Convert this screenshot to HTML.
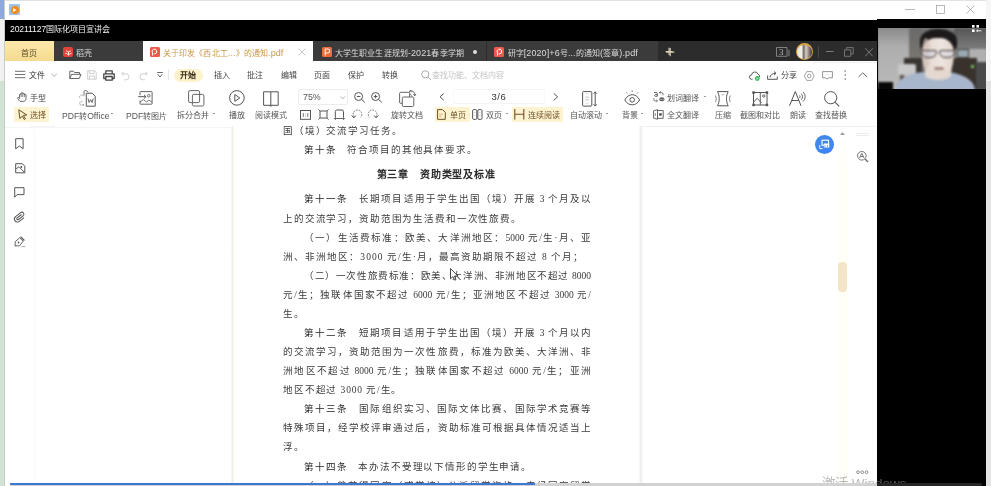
<!DOCTYPE html>
<html lang="zh-CN">
<head>
<meta charset="utf-8">
<style>
*{margin:0;padding:0;box-sizing:border-box}
html,body{width:991px;height:486px;overflow:hidden;background:#fff;position:relative;font-family:"Liberation Sans",sans-serif}
body{will-change:transform}
.a{position:absolute}
.ui{font-family:"Liberation Sans",sans-serif;font-size:8px;line-height:12px;color:#333;white-space:nowrap}
.doc{font-family:"Liberation Serif",serif;font-size:9.5px;line-height:12px;color:#3a3a3a;white-space:nowrap;letter-spacing:0.86px}
.art{color:#1e1e1e}
.L{font-size:9px}
.j2{text-align:justify;text-align-last:justify;letter-spacing:0}
.j{width:308px;text-align:justify;text-align-last:justify}
svg{position:absolute;overflow:visible}
.t8{font-family:"Liberation Sans",sans-serif;font-size:8px;line-height:12px;white-space:nowrap;margin-top:1.6px}
</style>
</head>
<body>
<!-- left desktop strip -->
<div class="a" style="left:0;top:0;width:5px;height:19px;background:#8eaadb"></div>
<div class="a" style="left:0;top:19px;width:5px;height:62px;background:#f1f1f1"></div>
<div class="a" style="left:0;top:81px;width:5px;height:405px;background:#d1e3d3"></div>
<div class="a" style="left:4px;top:0;width:1px;height:486px;background:#c8ccc8"></div>
<!-- right desktop strip -->
<div class="a" style="left:986px;top:0;width:5px;height:81px;background:#f6f6f6"></div>
<div class="a" style="left:986px;top:81px;width:5px;height:405px;background:#e4e4e4"></div>

<!-- title bar -->
<div class="a" style="left:5px;top:0;width:981px;height:1px;background:#e2e2e2"></div>
<div class="a" style="left:9px;top:4px;width:11px;height:11px;background:#9ec3e6;border-radius:1px"></div>
<div class="a" style="left:10.5px;top:5.5px;width:8px;height:8px;background:#f08a1c;border-radius:50%"></div>
<svg style="left:13px;top:7.5px" width="4" height="4"><path d="M0 0 L3.5 2 L0 4Z" fill="#fff"/></svg>
<svg style="left:905px;top:9px" width="10" height="2"><path d="M0 0.5H10" stroke="#9a9a9a" stroke-width="0.7"/></svg>
<svg style="left:935.5px;top:5px" width="9" height="9"><rect x="0.5" y="0.5" width="8" height="8" fill="none" stroke="#9a9a9a" stroke-width="0.7"/></svg>
<svg style="left:966px;top:5px" width="9" height="9"><path d="M0.5 0.5L8.5 8.5M8.5 0.5L0.5 8.5" stroke="#9a9a9a" stroke-width="0.7"/></svg>

<!-- black bar -->
<div class="a" style="left:5px;top:19.5px;width:981px;height:21.5px;background:#000"></div>
<div class="a ui" style="left:10px;top:23.2px;color:#f4f4f4"><span style="font-size:8.6px;letter-spacing:-0.1px">20211127</span>国际化项目宣讲会</div>

<!-- tab bar -->
<div class="a" style="left:5px;top:41px;width:872px;height:20.4px;background:#2c2c2c"></div>
<div class="a" style="left:5px;top:41px;width:49px;height:20.4px;background:linear-gradient(#fbe9ad,#f5da8f)"></div>
<div class="a ui" style="left:21px;top:48px;color:#5b4a27">首页</div>
<div class="a" style="left:54px;top:41px;width:89px;height:20.4px;background:#3b3b3b"></div>
<div class="a" style="left:63px;top:47px;width:10px;height:10px;background:#e8403a;border-radius:2px"></div>
<div class="a ui" style="left:75.5px;top:48px;color:#dcdcdc;letter-spacing:0.3px">稻壳</div>
<div class="a" style="left:143px;top:41px;width:170px;height:20.4px;background:#fff"></div>
<div class="a" style="left:149.5px;top:47px;width:10px;height:10px;background:#ef5a4a;border-radius:1.5px"></div>
<div class="a ui" style="left:163px;top:47px;color:#c99843;letter-spacing:0.1px">关于印发《西北工<span class="L">...</span>》的通知<span class="L">.pdf</span></div>
<svg style="left:298px;top:47.5px" width="8" height="8"><path d="M0.5 0.5L7.5 7.5M7.5 0.5L0.5 7.5" stroke="#c9c9c9" stroke-width="1"/></svg>
<div class="a" style="left:313px;top:41px;width:173px;height:20.4px;background:#3b3b3b"></div>
<div class="a" style="left:322px;top:47px;width:10px;height:10px;background:#f06a3a;border-radius:1.5px"></div>
<div class="a ui" style="left:335px;top:47px;color:#dcdcdc;letter-spacing:0.1px">大学生职业生涯规划<span class="L">-2021</span>春季学期</div>
<div class="a" style="left:473px;top:50px;width:4px;height:4px;background:#ddd;border-radius:50%"></div>
<div class="a" style="left:486px;top:41px;width:1px;height:20.4px;background:#2b2b2b"></div>
<div class="a" style="left:487px;top:41px;width:171px;height:20.4px;background:#3b3b3b"></div>
<div class="a" style="left:494px;top:47px;width:10px;height:10px;background:#ef5a4a;border-radius:1.5px"></div>
<div class="a ui" style="left:507.5px;top:47px;color:#dcdcdc;letter-spacing:0.1px">研字<span class="L">[2020]+6</span>号<span class="L">...</span>的通知<span class="L">(</span>签章<span class="L">).pdf</span></div>
<div class="a ui" style="left:665px;top:44px;color:#ddd;font-size:14px;line-height:14px">+</div>

<svg style="left:151px;top:48px" width="7" height="8"><path d="M1.5 7.5V4.8 M1.5 4.8A2.3 2.3 0 1 1 3.6 5.8H2.6" fill="none" stroke="#fff" stroke-width="1"/></svg>
<svg style="left:323.5px;top:48px" width="7" height="8"><path d="M1.2 7.5V1H3.8A2 2 0 0 1 3.8 5H1.2" fill="none" stroke="#fff" stroke-width="1"/></svg>
<svg style="left:495.5px;top:48px" width="7" height="8"><path d="M1.5 7.5V4.8 M1.5 4.8A2.3 2.3 0 1 1 3.6 5.8H2.6" fill="none" stroke="#fff" stroke-width="1"/></svg>
<svg style="left:65px;top:49px" width="7" height="7"><path d="M3.5 6.5V2.5 M3.5 6C2.5 4.8 1.5 4.3 0.5 4.3 M3.5 6C4.5 4.8 5.5 4.3 6.5 4.3 M3.5 3.5C2.8 2.5 2 2 1.2 2 M3.5 3.5C4.2 2.5 5 2 5.8 2" fill="none" stroke="#fff" stroke-width="0.9"/></svg>
<svg style="left:665.5px;top:47.5px" width="9" height="9"><path d="M4.2 0V8.2 M0 4.1H8.3" stroke="#d9cba6" stroke-width="1.2"/></svg>
<svg style="left:776px;top:47px" width="15" height="10"><path d="M0.5 0.5H11V9.3H0.5Z" fill="none" stroke="#8a8a8a" stroke-width="0.9"/><path d="M11 2L14 3.2V9.3H11" fill="#5a5a5a" stroke="none"/></svg>
<div class="a" style="left:779px;top:47px;font-family:'Liberation Serif',serif;font-size:9px;line-height:10px;color:#bbb">3</div>
<div class="a" style="left:796px;top:43.3px;width:17px;height:17px;border-radius:50%;background:#d9a440"></div>
<div class="a" style="left:797.2px;top:44.5px;width:14.6px;height:14.6px;border-radius:50%;background:linear-gradient(90deg,#e8e4de 0,#f2efe8 30%,#6e6a64 45%,#d8d0c4 60%,#3a3230 100%)"></div>
<div class="a" style="left:818px;top:46px;width:1px;height:12px;background:#4a4a4a"></div>
<svg style="left:826px;top:50.5px" width="8" height="2"><path d="M0 0.5H7.5" stroke="#7c7c7c" stroke-width="1"/></svg>
<svg style="left:844px;top:47px" width="10" height="10"><path d="M0.5 2.8H6.8V9.3H0.5Z M2.6 2.8V0.6H9.2V7H6.8" fill="none" stroke="#7c7c7c" stroke-width="0.9"/></svg>
<svg style="left:864.5px;top:47.5px" width="8" height="9"><path d="M0.3 0.3L7.7 8.3 M7.7 0.3L0.3 8.3" stroke="#7c7c7c" stroke-width="1"/></svg>
<!-- overlay video panel -->
<div class="a" style="left:877px;top:19px;width:109px;height:467px;background:#000"></div>
<div class="a" style="left:877.5px;top:27.6px;width:108.3px;height:61.3px;overflow:hidden;background:#808080">
 <div class="a" style="left:0;top:0;width:109px;height:62px;filter:blur(0.9px)">
  <div class="a" style="left:0;top:0;width:109px;height:62px;background:linear-gradient(90deg,#8c8c8c 0,#a6a6a6 15%,#b2b2b2 26%,#767676 34%,#6a6a6a 50%,#7e7e7e 75%,#8c8c8c 100%)"></div>
  <div class="a" style="left:0;top:0;width:31px;height:62px;background:linear-gradient(180deg,#8a8a8a 0,#aeaeae 30%,#bababa 100%)"></div>
  <div class="a" style="left:31px;top:0;width:13px;height:32px;background:linear-gradient(180deg,#6a6a6a,#7a7670)"></div>
  <div class="a" style="left:76px;top:0;width:33px;height:22px;background:linear-gradient(180deg,#555,#7e7e7e)"></div>
  <div class="a" style="left:78px;top:21px;width:31px;height:14px;background:#b0b0b0"></div>
  <div class="a" style="left:79px;top:21px;width:12px;height:9px;background:#9aa8b0;border:1px solid #3a3a3a"></div>
  <div class="a" style="left:26px;top:30px;width:18px;height:16px;background:#3a3530"></div>
  <div class="a" style="left:74px;top:30px;width:25px;height:32px;background:#38312c"></div>
  <div class="a" style="left:98px;top:34px;width:11px;height:28px;background:#4a4a4a"></div>
  <div class="a" style="left:93px;top:37px;width:3px;height:3px;background:#7ac060"></div>
  <div class="a" style="left:20.5px;top:36.5px;width:18px;height:11px;background:#c8c8c8;border-radius:2px 2px 0 0"></div>
  <div class="a" style="left:22px;top:47px;width:4px;height:15px;background:#5a524c"></div>
  <div class="a" style="left:42px;top:1px;width:37px;height:24px;border-radius:48% 48% 30% 30%;background:#1c1a1a"></div>
  <div class="a" style="left:44.5px;top:10px;width:31.5px;height:44px;border-radius:45% 45% 50% 50% / 35% 35% 70% 70%;background:linear-gradient(90deg,#cdbcb4 0,#e6dad4 25%,#efe6e0 60%,#e2d4cc 100%)"></div>
  <div class="a" style="left:44px;top:10px;width:8px;height:30px;border-radius:50%;background:#d4c4bc;opacity:0.7"></div>
  <div class="a" style="left:43.5px;top:22px;width:16px;height:8.5px;border-radius:2px 2px 6px 6px;border:1.4px solid #3e3a36;background:rgba(200,205,235,0.3)"></div>
  <div class="a" style="left:61px;top:22px;width:16px;height:8.5px;border-radius:2px 2px 6px 6px;border:1.4px solid #3e3a36;background:rgba(200,205,235,0.3)"></div>
  <div class="a" style="left:56px;top:39px;width:10px;height:3px;border-radius:2px;background:#a88a84"></div>
  <div class="a" style="left:17.5px;top:44px;width:80px;height:30px;border-radius:40% 40% 0 0 / 60% 60% 0 0;background:#a8b6cc"></div>
  <div class="a" style="left:47px;top:42px;width:26px;height:10px;border-radius:0 0 50% 50%;background:#e4d8d0"></div>
  <div class="a" style="left:0;top:54px;width:15px;height:10px;background:#080808"></div>
 </div>
</div>
<svg style="left:972px;top:25px" width="10" height="8"><rect x="0" y="0" width="2.6" height="2.6" fill="#fff"/><rect x="4.4" y="0" width="2.6" height="2.6" fill="#fff"/><rect x="0" y="4.4" width="2.6" height="2.6" fill="#fff"/><path d="M4.6 5.8H9.5 M5.8 4.7L4.6 5.8L5.8 6.9" stroke="#fff" stroke-width="0.9" fill="none"/></svg>


<!-- menu row -->
<div class="a" style="left:5px;top:62px;width:872px;height:64px;background:#fff"></div>
<svg style="left:15px;top:70px" width="11" height="9"><path d="M0 1.3H10.3M0 4.5H10.3M0 7.7H10.3" stroke="#666" stroke-width="0.95"/></svg>
<div class="a t8" style="left:29px;top:68.4px;color:#333">文件</div>
<svg style="left:50.5px;top:72.5px" width="7" height="5"><path d="M0.5 0.5L3.2 3.5L6 0.5" fill="none" stroke="#aaa" stroke-width="0.9"/></svg>
<svg style="left:69px;top:70px" width="13" height="10"><path d="M0.8 8.5V1.2H4.3L5.5 2.5H10.5V4.2M0.8 8.5L2.6 4.3H12L10.2 8.5Z" fill="none" stroke="#666" stroke-width="1" stroke-linejoin="round"/></svg>
<svg style="left:87px;top:70px" width="10" height="10"><path d="M0.7 0.7H7.5L9.2 2.4V9.2H0.7Z M2.5 0.7V3.5H7V0.7 M2.5 9.2V6H7.5V9.2" fill="none" stroke="#d0d0d0" stroke-width="1"/></svg>
<svg style="left:103px;top:69.5px" width="12" height="11"><path d="M2.8 3.5V0.8H9.2V3.5 M2.5 8.5H0.8V3.8H11.2V8.5H9.5 M2.8 6.5H9.2V10.2H2.8Z" fill="none" stroke="#444" stroke-width="1.3" stroke-linejoin="round"/></svg>
<svg style="left:121px;top:70.5px" width="9" height="9"><path d="M2.5 0.8L0.8 2.8L2.8 4.5 M0.9 2.8H5A3 3 0 0 1 5 8.8H3" fill="none" stroke="#d0d0d0" stroke-width="1"/></svg>
<svg style="left:138.5px;top:70.5px" width="9" height="9"><path d="M6.5 0.8L8.2 2.8L6.2 4.5 M8.1 2.8H4A3 3 0 0 0 4 8.8H6" fill="none" stroke="#d0d0d0" stroke-width="1"/></svg>
<svg style="left:157px;top:72px" width="6" height="6"><path d="M0.3 0.5H5.7 M0.8 2.3L3 5L5.2 2.3" fill="none" stroke="#555" stroke-width="0.9"/></svg>
<div class="a" style="left:168px;top:70px;width:1px;height:10px;background:#e6e6e6"></div>
<div class="a" style="left:173.5px;top:68.5px;width:29px;height:13px;border-radius:6.5px;background:#fdf2cc"></div>
<div class="a t8" style="left:180px;top:68.4px;color:#3a2f1a;font-weight:bold">开始</div>
<div class="a t8" style="left:213.5px;top:68.4px;color:#444">插入</div>
<div class="a t8" style="left:247px;top:68.4px;color:#444">批注</div>
<div class="a t8" style="left:281px;top:68.4px;color:#444">编辑</div>
<div class="a t8" style="left:314px;top:68.4px;color:#444">页面</div>
<div class="a t8" style="left:348px;top:68.4px;color:#444">保护</div>
<div class="a t8" style="left:381.5px;top:68.4px;color:#444">转换</div>
<svg style="left:420.5px;top:70px" width="11" height="11"><circle cx="4.3" cy="4.3" r="3.6" fill="none" stroke="#aaa" stroke-width="1"/><path d="M7 7L10 10" stroke="#aaa" stroke-width="1"/></svg>
<div class="a t8" style="left:432px;top:68.4px;color:#c4c4c4">查找功能、文档内容</div>
<!-- right menu icons -->
<svg style="left:748.5px;top:70.5px" width="13" height="10"><path d="M3.5 8.3H2.8A2.2 2.2 0 0 1 2.6 3.9A3.3 3.3 0 0 1 9 3.2A2.4 2.4 0 0 1 10.6 6.2" fill="none" stroke="#555" stroke-width="1"/><circle cx="8.3" cy="7.5" r="2.4" fill="#3dbb62"/><path d="M7.2 7.5L8 8.3L9.4 6.8" fill="none" stroke="#fff" stroke-width="0.7"/></svg>
<svg style="left:767px;top:71px" width="11" height="9"><path d="M0.6 4.5V8.3H10.3V5.5 M3 6.5C3.5 3.5 5.5 2.3 8.8 2.3 M7 0.5L9 2.3L7 4.2" fill="none" stroke="#555" stroke-width="1"/></svg>
<div class="a t8" style="left:781px;top:68.4px;color:#444">分享</div>
<svg style="left:803.5px;top:70.5px" width="11" height="10"><path d="M2.8 0.6H7.7L10.2 5L7.7 9.4H2.8L0.3 5Z" fill="none" stroke="#999" stroke-width="0.9"/><circle cx="5.25" cy="5" r="1.8" fill="none" stroke="#999" stroke-width="0.9"/></svg>
<svg style="left:821.5px;top:70.5px" width="11" height="9"><path d="M0.6 0.6H10.4V6.8H6.3L5 8.2L3.7 6.8H0.6Z" fill="none" stroke="#888" stroke-width="0.9"/><path d="M3.3 3.7H7.7" stroke="#bbb" stroke-width="0.6" stroke-dasharray="1 0.6"/></svg>
<svg style="left:843.5px;top:70px" width="3" height="10"><circle cx="1.2" cy="1" r="0.75" fill="#666"/><circle cx="1.2" cy="5" r="0.75" fill="#666"/><circle cx="1.2" cy="9" r="0.75" fill="#666"/></svg>
<svg style="left:857.5px;top:72px" width="10" height="6"><path d="M0.5 5L4.8 0.8L9.2 5" fill="none" stroke="#666" stroke-width="1"/></svg>
<div class="a" style="left:812px;top:62px;width:65px;height:1px;background:#eeeeee"></div>

<!-- toolbar row -->
<svg style="left:17px;top:91.5px" width="10" height="10"><path d="M3 9.4C1.9 8.6 1 7.3 0.7 6.3C0.5 5.6 1.2 5.2 1.8 5.7L2.6 6.4V2.6A0.8 0.8 0 0 1 4.2 2.6V1.4A0.8 0.8 0 0 1 5.8 1.4V2.1A0.8 0.8 0 0 1 7.4 2.1V2.9A0.8 0.8 0 0 1 9 2.9V6.3C9 8.2 8.1 9.4 6.4 9.4Z" fill="none" stroke="#555" stroke-width="0.9" stroke-linejoin="round"/><path d="M4.2 2.6V5 M5.8 2.1V5 M7.4 2.9V5" stroke="#555" stroke-width="0.7"/></svg>
<div class="a t8" style="left:30px;top:91px;color:#444">手型</div>
<div class="a" style="left:13.5px;top:106.5px;width:35px;height:15.5px;background:#fdf3d0"></div>
<svg style="left:17.5px;top:108.5px" width="10" height="11"><path d="M0.8 0.8L8.8 6L5.3 6.4L7.5 9.8L6.2 10.4L4.2 7.2L1.8 9.5Z" fill="none" stroke="#6e5024" stroke-width="1" stroke-linejoin="round"/></svg>
<div class="a t8" style="left:30px;top:108px;color:#6e5024">选择</div>

<!-- PDF转Office -->
<svg style="left:79px;top:90px" width="18" height="17"><path d="M5 5.5V1.3A0.6 0.6 0 0 1 5.6 0.7H7.8L9.2 2.2" fill="none" stroke="#666" stroke-width="0.9"/><path d="M7.3 3.2H13.2L16.2 6.2V16.2H7.3Z" fill="none" stroke="#555" stroke-width="1"/><path d="M9 8.5L10.1 12.5L11.6 9.6L13.1 12.5L14.2 8.5" fill="none" stroke="#555" stroke-width="0.9"/><path d="M4.5 6.2A2 2 0 0 0 0.8 7.8V8.3 M3.3 11.6A2 2 0 0 0 0.8 12.8V13.8 M0.8 13.8A1.3 1.3 0 0 0 2 15H5 M4 14L5 15L4 16" fill="none" stroke="#777" stroke-width="0.8" stroke-dasharray="1.4 0.8"/></svg>
<div class="a t8" style="left:62px;top:108px;color:#555;font-size:8.6px">PDF<span style="font-size:8px">转</span>Office</div>
<div class="a" style="left:111px;top:112.8px;width:2px;height:1.4px;background:#9a9a9a"></div>
<!-- PDF转图片 -->
<svg style="left:137.5px;top:90.5px" width="16" height="15"><path d="M2 4.3V1.2A0.6 0.6 0 0 1 2.6 0.6H13.5A0.6 0.6 0 0 1 14.1 1.2V12.6A0.6 0.6 0 0 1 13.5 13.2H2.6A0.6 0.6 0 0 1 2 12.6V9.5" fill="none" stroke="#666" stroke-width="1"/><path d="M0.2 5.7H7.8 M6 3.9L7.9 5.7L6 7.5" fill="none" stroke="#555" stroke-width="1"/><path d="M2 11L5.3 8.5L8.5 11L11 9.2L14.1 11.2" fill="none" stroke="#666" stroke-width="0.9"/><circle cx="10.8" cy="4.8" r="1.3" fill="none" stroke="#666" stroke-width="0.9"/></svg>
<div class="a t8" style="left:126px;top:108px;color:#555;font-size:8.6px">PDF<span style="font-size:8px">转图片</span></div>
<!-- 拆分合并 -->
<svg style="left:188px;top:90px" width="17" height="17"><rect x="0.6" y="0.6" width="11" height="12" rx="1.5" fill="none" stroke="#666" stroke-width="1"/><rect x="4.4" y="4.4" width="11.5" height="11.6" rx="1.5" fill="#fff" fill-opacity="0.0" stroke="#666" stroke-width="1"/></svg>
<div class="a t8" style="left:177px;top:108px;color:#555">拆分合并</div>
<div class="a" style="left:212.5px;top:112.8px;width:2px;height:1.4px;background:#9a9a9a"></div>
<!-- 播放 -->
<svg style="left:228.5px;top:90px" width="16" height="16"><circle cx="7.9" cy="7.9" r="7.3" fill="none" stroke="#555" stroke-width="1"/><path d="M5.8 4.5V11.3L10.8 7.9Z" fill="none" stroke="#555" stroke-width="1" stroke-linejoin="round"/></svg>
<div class="a t8" style="left:229px;top:108px;color:#555">播放</div>
<!-- 阅读模式 -->
<svg style="left:263px;top:90.5px" width="17" height="16"><path d="M0.6 0.8H7.8V14.3H0.6Z M7.8 0.8H15.2V14.3H7.8" fill="none" stroke="#555" stroke-width="1"/><path d="M6 14.3L7.8 15.3L9.6 14.3" fill="none" stroke="#555" stroke-width="0.8"/></svg>
<div class="a t8" style="left:255px;top:108px;color:#555">阅读模式</div>
<!-- zoom box -->
<div class="a" style="left:297.5px;top:89px;width:50px;height:15.5px;border:1px solid #ececec;border-radius:2px;background:#fff"></div>
<div class="a t8" style="left:303px;top:89.6px;color:#555;font-size:8.9px">75%</div>
<svg style="left:339.5px;top:95.5px" width="6" height="4"><path d="M0.4 0.4L2.7 3L5 0.4" fill="none" stroke="#aaa" stroke-width="0.8"/></svg>
<svg style="left:354px;top:92px" width="12" height="11"><circle cx="4.6" cy="4.5" r="4" fill="none" stroke="#555" stroke-width="1"/><path d="M7.5 7.4L10.8 10.4 M2.8 4.5H6.4" stroke="#555" stroke-width="1"/></svg>
<svg style="left:371px;top:92px" width="12" height="11"><circle cx="4.6" cy="4.5" r="4" fill="none" stroke="#555" stroke-width="1"/><path d="M7.5 7.4L10.8 10.4 M2.8 4.5H6.4 M4.6 2.7V6.3" stroke="#555" stroke-width="1"/></svg>
<svg style="left:300px;top:109.5px" width="11" height="10"><rect x="0.5" y="0.5" width="10" height="8.8" fill="none" stroke="#555" stroke-width="1"/><path d="M3.3 3V7 M7.8 3V7" stroke="#555" stroke-width="0.8"/><circle cx="5.5" cy="4" r="0.4" fill="#555"/><circle cx="5.5" cy="6" r="0.4" fill="#555"/></svg>
<svg style="left:317.5px;top:109px" width="11" height="11"><path d="M2 2H9V9H2Z" fill="none" stroke="#555" stroke-width="1"/><path d="M0.4 0.4L2 2 M10.6 0.4L9 2 M0.4 10.6L2 9 M10.6 10.6L9 9" stroke="#555" stroke-width="0.9"/></svg>
<svg style="left:333.5px;top:108.5px" width="11" height="11"><path d="M1.3 8V2.5A1.5 1.5 0 0 1 2.8 1H8A1.5 1.5 0 0 1 9.5 2.5V8" fill="none" stroke="#555" stroke-width="1"/><path d="M0.3 9.5H10.5 M1.8 8.2L0.4 9.5L1.8 10.8 M9 8.2L10.4 9.5L9 10.8" fill="none" stroke="#555" stroke-width="0.9"/></svg>
<svg style="left:350.5px;top:109px" width="12" height="10"><path d="M3 7.8A4.3 4.3 0 1 1 9.5 8.3" fill="none" stroke="#666" stroke-width="0.9" stroke-dasharray="1.6 1"/><path d="M0.8 6.5L2.9 8.8L4.8 6.6" fill="none" stroke="#444" stroke-width="1"/></svg>
<svg style="left:367px;top:109px" width="12" height="10"><path d="M9 7.8A4.3 4.3 0 1 0 2.5 8.3" fill="none" stroke="#666" stroke-width="0.9" stroke-dasharray="1.6 1"/><path d="M11.2 6.5L9.1 8.8L7.2 6.6" fill="none" stroke="#444" stroke-width="1"/></svg>
<!-- 旋转文档 -->
<svg style="left:399px;top:90px" width="18" height="17"><rect x="0.6" y="2.3" width="10" height="11" rx="1.2" fill="none" stroke="#666" stroke-width="1"/><rect x="3.3" y="7" width="11.5" height="9.5" rx="1.2" fill="#fff" stroke="#666" stroke-width="1"/><path d="M11 0.8A4 4 0 0 1 15.8 5.3 M14.3 4.2L15.8 5.8L17 4 M10 2.5L11.2 0.7L12.6 2.2" fill="none" stroke="#555" stroke-width="0.9"/><path d="M10.5 3L13.5 7" stroke="#666" stroke-width="0.7"/></svg>
<div class="a t8" style="left:391px;top:108px;color:#555">旋转文档</div>
<!-- page nav -->
<svg style="left:439px;top:93px" width="6" height="8"><path d="M4.8 0.5L1 3.8L4.8 7.3" fill="none" stroke="#555" stroke-width="1"/></svg>
<div class="a" style="left:452.5px;top:89px;width:92px;height:14.5px;border:1px solid #f4f4f4;border-left-color:#f8f8f8;border-right-color:#f8f8f8;border-radius:2px"></div>
<div class="a t8" style="left:491.5px;top:89px;color:#333;font-size:9.5px;letter-spacing:0.5px">3/6</div>
<svg style="left:553px;top:93px" width="6" height="8"><path d="M0.8 0.5L4.6 3.8L0.8 7.3" fill="none" stroke="#555" stroke-width="1"/></svg>
<!-- 单页 双页 连续阅读 -->
<div class="a" style="left:434.5px;top:106.5px;width:35px;height:15.5px;background:#fdf3d0"></div>
<svg style="left:437px;top:108.5px" width="9" height="11"><path d="M0.6 0.6H5.5L8.3 3.4V10.3H0.6Z" fill="none" stroke="#6e5024" stroke-width="1"/><path d="M2.3 5.2H5.8 M2.3 7.3H4.5" stroke="#c8a05a" stroke-width="0.8"/></svg>
<div class="a t8" style="left:450px;top:108px;color:#6e5024">单页</div>
<svg style="left:472px;top:108.5px" width="11" height="11"><rect x="0.6" y="0.6" width="4.2" height="9.8" rx="1.2" fill="none" stroke="#555" stroke-width="1"/><rect x="5.8" y="0.6" width="4.2" height="9.8" rx="1.2" fill="none" stroke="#555" stroke-width="1"/><path d="M2.7 3V4 M2.7 6V7 M7.9 3V4 M7.9 6V7" stroke="#999" stroke-width="0.6"/></svg>
<div class="a t8" style="left:486px;top:108px;color:#555">双页</div>
<div class="a" style="left:506px;top:112.8px;width:2px;height:1.4px;background:#9a9a9a"></div>
<div class="a" style="left:512px;top:106.5px;width:51px;height:15.5px;background:#fdf3d0"></div>
<svg style="left:514px;top:109px" width="11" height="11"><path d="M0.8 0V10.5 M9.8 0V10.5 M0.8 5.2H9.8" fill="none" stroke="#6e5024" stroke-width="1.1"/></svg>
<div class="a t8" style="left:527.5px;top:108px;color:#6e5024">连续阅读</div>
<!-- 自动滚动 -->
<svg style="left:581.5px;top:90.5px" width="16" height="16"><rect x="0.6" y="0.6" width="9.2" height="14.5" rx="0.8" fill="none" stroke="#555" stroke-width="1"/><path d="M3.2 6.2H7.2 M3.2 8.8H7.2" stroke="#aaa" stroke-width="0.7"/><path d="M4 3.5L5.2 2.5L6.4 3.5 M4 12L5.2 13L6.4 12" fill="none" stroke="#bbb" stroke-width="0.6"/><path d="M13.2 1V15 M11.6 2.6L13.2 0.8L14.8 2.6 M11.6 13.3L13.2 15.1L14.8 13.3" fill="none" stroke="#555" stroke-width="1"/></svg>
<div class="a t8" style="left:570px;top:108px;color:#555">自动滚动</div>
<div class="a" style="left:605.5px;top:112.8px;width:2px;height:1.4px;background:#9a9a9a"></div>
<!-- 背景 -->
<svg style="left:624px;top:90px" width="17" height="16"><path d="M0.8 10C2.8 6.3 5.3 4.7 8.2 4.7C11.1 4.7 13.6 6.3 15.6 10C13.6 13.5 11.1 14.8 8.2 14.8C5.3 14.8 2.8 13.5 0.8 10Z" fill="none" stroke="#555" stroke-width="1"/><circle cx="8.2" cy="9.8" r="2.3" fill="none" stroke="#555" stroke-width="1"/><path d="M8.2 0.4V2.2 M2.3 2.3L3.3 3.5 M14.1 2.3L13.1 3.5" stroke="#666" stroke-width="0.9"/></svg>
<div class="a t8" style="left:622px;top:108px;color:#555">背景</div>
<div class="a" style="left:641px;top:112.8px;width:2px;height:1.4px;background:#9a9a9a"></div>
<!-- 划词翻译 全文翻译 -->
<svg style="left:653px;top:91px" width="12" height="11"><path d="M1 1.5H3.3A1 1 0 0 1 4.3 2.5V5.3 M4.3 3.6H2.2A1 1 0 0 0 2.2 5.3H4.3" fill="none" stroke="#555" stroke-width="0.9"/><path d="M7.5 0.5L6.3 1.6L7.5 2.7 M6.4 1.6H8.5A1.5 1.5 0 0 1 10 3.1V4.3 M0.8 7.2V8.4A1.5 1.5 0 0 0 2.3 9.9H4.3 M3.4 8.9L4.5 9.9L3.4 10.9" fill="none" stroke="#555" stroke-width="0.8"/><ellipse cx="8.8" cy="8.3" rx="2.6" ry="2" fill="#555"/><path d="M6.3 8.3H11.3" stroke="#fff" stroke-width="0.5"/></svg>
<div class="a t8" style="left:667px;top:91px;color:#555">划词翻译</div>
<div class="a" style="left:703.5px;top:95.8px;width:2px;height:1.4px;background:#9a9a9a"></div>
<svg style="left:653px;top:109px" width="11" height="11"><path d="M0.6 1.8L4.5 0.6V10.2L0.6 9.2Z M4.5 1.5H10.2V9.3H4.5" fill="none" stroke="#555" stroke-width="0.9"/><path d="M2.3 4.3V6.6 M6.8 4V6.8 M8 4V6.8" stroke="#555" stroke-width="0.8"/><rect x="6.3" y="4.5" width="2.4" height="1.9" fill="#555"/></svg>
<div class="a t8" style="left:667px;top:108px;color:#555">全文翻译</div>
<!-- 压缩 -->
<svg style="left:714.5px;top:90.5px" width="16" height="16"><path d="M2.5 0.6H13.2 M2.5 14.8H13.2 M2.5 0.6C4.8 4.5 4.8 10.8 2.5 14.8 M13.2 0.6C10.9 4.5 10.9 10.8 13.2 14.8" fill="none" stroke="#555" stroke-width="1"/><path d="M0.4 4.5C1.5 6.5 1.5 9 0.4 11 M15.3 4.5C14.2 6.5 14.2 9 15.3 11" fill="none" stroke="#666" stroke-width="0.8"/><path d="M6 3H9.7L7.85 4.8Z" fill="#bbb"/></svg>
<div class="a t8" style="left:714.5px;top:108px;color:#555">压缩</div>
<!-- 截图和对比 -->
<svg style="left:751.5px;top:90.5px" width="17" height="16"><rect x="1.5" y="1.5" width="13.5" height="12.5" fill="none" stroke="#555" stroke-width="1"/><path d="M1.5 11.5L5 7.2L9.5 12 M8.3 14V1.5" fill="none" stroke="#555" stroke-width="0.9"/><circle cx="11.8" cy="5" r="1.2" fill="none" stroke="#555" stroke-width="0.9"/><rect x="0.3" y="0.3" width="2.5" height="2.5" fill="#555"/><rect x="13.7" y="0.3" width="2.5" height="2.5" fill="#555"/><rect x="0.3" y="12.7" width="2.5" height="2.5" fill="#555"/><rect x="13.7" y="12.7" width="2.5" height="2.5" fill="#555"/></svg>
<div class="a t8" style="left:740px;top:108px;color:#555">截图和对比</div>
<!-- 朗读 -->
<svg style="left:789px;top:90px" width="18" height="17"><path d="M0.5 15.8L6.3 1.5L12 15.8 M2.8 10.5H9.8" fill="none" stroke="#555" stroke-width="1"/><path d="M10.6 5.5A2 2 0 0 1 10.6 8 M12.2 3.8A4.2 4.2 0 0 1 12.2 9.8 M14 2A6.4 6.4 0 0 1 14 11.6" fill="none" stroke="#555" stroke-width="0.9"/></svg>
<div class="a t8" style="left:790px;top:108px;color:#555">朗读</div>
<!-- 查找替换 -->
<svg style="left:823.5px;top:90.5px" width="16" height="16"><circle cx="6.7" cy="6.7" r="6.1" fill="none" stroke="#555" stroke-width="1"/><path d="M11 11.2L15.2 15.3" stroke="#555" stroke-width="1.1"/></svg>
<div class="a t8" style="left:815px;top:108px;color:#555">查找替换</div>
<div class="a" style="left:5px;top:126.5px;width:226px;height:1px;background:#f5f5f5"></div>

<!-- content -->
<div class="a" style="left:230.5px;top:126px;width:3.5px;height:360px;background:linear-gradient(90deg,#faf9f6,#eeede8 45%,#f3f2ee 70%,#fdfdfc)"></div>
<div class="a" style="left:638.5px;top:126px;width:4px;height:360px;background:linear-gradient(90deg,#fafafa,#eeeeee 40%,#f2f2f2 65%,#fdfdfd)"></div>

<div class="a doc" style="left:283px;top:125.3px">国（境）交流学习任务。</div>
<div class="a doc" style="left:304px;top:144.2px"><span class="art">第十条</span>　符合项目的其他具体要求。</div>
<div class="a doc j2" style="left:304px;top:193.4px;width:287px"><span class="art">第十一条</span>　长期项目适用于学生出国（境）开展 3 个月及以</div>
<div class="a doc" style="left:283px;top:212.5px">上的交流学习，资助范围为生活费和一次性旅费。</div>
<div class="a doc j2" style="left:304px;top:231.6px;width:287px">（一）生活费标准：欧美、大洋洲地区：5000 元/生·月、亚</div>
<div class="a doc" style="left:283px;top:250.6px;letter-spacing:1.05px">洲、非洲地区：3000 元/生·月，最高资助期限不超过 8 个月；</div>
<div class="a doc j2" style="left:304px;top:269.7px;width:287px">（二）一次性旅费标准：欧美、大洋洲、非洲地区不超过 8000</div>
<div class="a doc j2" style="left:283px;top:288.8px;width:308px">元/生；独联体国家不超过 6000 元/生；亚洲地区不超过 3000 元/</div>
<div class="a doc" style="left:283px;top:307.9px">生。</div>
<div class="a doc j2" style="left:304px;top:327.0px;width:287px"><span class="art">第十二条</span>　短期项目适用于学生出国（境）开展 3 个月以内</div>
<div class="a doc j2" style="left:283px;top:346.0px;width:308px">的交流学习，资助范围为一次性旅费，标准为欧美、大洋洲、非</div>
<div class="a doc j2" style="left:283px;top:365.1px;width:308px">洲地区不超过 8000 元/生；独联体国家不超过 6000 元/生；亚洲</div>
<div class="a doc" style="left:283px;top:384.2px">地区不超过 3000 元/生。</div>
<div class="a doc j2" style="left:304px;top:403.3px;width:287px"><span class="art">第十三条</span>　国际组织实习、国际文体比赛、国际学术竞赛等</div>
<div class="a doc j2" style="left:283px;top:422.4px;width:308px">特殊项目，经学校评审通过后，资助标准可根据具体情况适当上</div>
<div class="a doc" style="left:283px;top:441.4px">浮。</div>
<div class="a doc" style="left:304px;top:460.5px"><span class="art">第十四条</span>　本办法不受理以下情形的学生申请。</div>
<div class="a doc j2" style="left:304px;top:479.6px;width:287px">（一）曾获得国家（或学校）公派留学资格，未经国家留学</div>
<div class="a" style="left:376.5px;top:169px;font-family:'Liberation Sans',sans-serif;font-weight:bold;font-size:10px;line-height:12px;color:#2a2a2a;white-space:nowrap;letter-spacing:0.85px">第三章　资助类型及标准</div>
<!-- left sidebar icons -->
<div class="a" style="left:34px;top:129px;width:1px;height:357px;background:#fbfbf4"></div>
<div class="a" style="left:30px;top:126px;width:25px;height:1px;background:#f2f2f2"></div>
<svg style="left:15px;top:137.5px" width="9" height="12"><path d="M0.7 0.7H8.1V10.8L4.4 8L0.7 10.8Z" fill="none" stroke="#555" stroke-width="1" stroke-linejoin="round"/></svg>
<svg style="left:14.5px;top:162.5px" width="11" height="11"><path d="M0.7 0.7H7.3L9.8 3.2V9.8H0.7Z" fill="none" stroke="#555" stroke-width="1"/><path d="M0.7 6L4 3.8L9.6 9.6" fill="none" stroke="#555" stroke-width="0.9"/><circle cx="6.3" cy="3.9" r="1" fill="#555"/></svg>
<svg style="left:14px;top:187px" width="11" height="11"><path d="M0.7 0.7H10V7.6H3L0.7 10.2Z" fill="none" stroke="#555" stroke-width="1" stroke-linejoin="round"/></svg>
<svg style="left:14px;top:211.5px" width="12" height="11"><path transform="translate(5.6,5.3) rotate(52) scale(0.8) translate(-4.75,-7.6)" d="M3.5 4V10.5A1.25 1.25 0 0 0 6 10.5V3A2.5 2.5 0 0 0 1 3V11A3.75 3.75 0 0 0 8.5 11V4" fill="none" stroke="#555" stroke-width="1.25" stroke-linecap="round"/></svg>
<svg style="left:14px;top:236px" width="12" height="12"><path d="M5.8 1.8L9.2 5.2L5.5 9.8L1 10L1.3 5.5Z" fill="none" stroke="#555" stroke-width="0.9" stroke-linejoin="round"/><path d="M6.5 0.6L10.4 4.5" stroke="#555" stroke-width="1.2"/><circle cx="4.5" cy="6.5" r="0.9" fill="#555"/><path d="M7.5 10.8C8.3 10 8.8 11.2 9.5 10.5C10 10 10.5 11 11.3 10.5" fill="none" stroke="#666" stroke-width="0.7"/></svg>
<!-- right side -->
<div class="a" style="left:815px;top:134.6px;width:19px;height:19px;border-radius:50%;background:#3f86ef"></div>
<svg style="left:819px;top:138.5px" width="11" height="11"><rect x="3" y="1.2" width="6.5" height="5" fill="none" stroke="#fff" stroke-width="1.1"/><rect x="4.8" y="4.5" width="5.5" height="4" fill="#fff"/><path d="M0.8 6V9.5H3.5 M6 6.2V7.8 M8.5 6.2V7.8" stroke="#3f86ef" stroke-width="0.8" fill="none"/><path d="M0.8 6V9.6H3.6" stroke="#fff" stroke-width="0.9" fill="none"/></svg>
<div class="a" style="left:838px;top:128px;width:9.5px;height:355px;background:linear-gradient(180deg,#fff 0,#fffef7 12%,#fffef7 100%)"></div>
<svg style="left:840px;top:132px" width="5" height="3"><path d="M0 3L2.5 0.2L5 3Z" fill="#999"/></svg>
<div class="a" style="left:838px;top:262px;width:8.5px;height:30px;border-radius:4px;background:#f5e5c8"></div>
<div class="a" style="left:855.5px;top:132.8px;width:13.5px;height:1px;background:#ececec"></div>
<div class="a" style="left:855.5px;top:135.2px;width:13.5px;height:1px;background:#ececec"></div>
<svg style="left:856.5px;top:150.5px" width="12" height="12"><circle cx="4.8" cy="4.8" r="4.3" fill="none" stroke="#666" stroke-width="0.9"/><path d="M2.6 7L4.8 2.3L7 7 M3.4 5.5H6.2" fill="none" stroke="#555" stroke-width="0.8"/><path d="M8 8L11 11" stroke="#666" stroke-width="1.3"/></svg>
<div class="a" style="left:641px;top:126px;width:236px;height:1px;background:#f1f1f1"></div>
<!-- mouse cursor -->
<svg style="left:449.6px;top:267.8px" width="9" height="13"><path d="M0.5 0.5V10.8L2.9 8.6L4.6 12.2L6 11.5L4.4 8H7.9Z" fill="#fff" stroke="#333" stroke-width="0.9" stroke-linejoin="round"/></svg>
<!-- bottom progress bar & overlays -->
<svg style="left:856px;top:469.5px" width="13" height="5"><circle cx="2" cy="2.2" r="1.4" fill="none" stroke="#777" stroke-width="0.8"/><circle cx="6.3" cy="2.2" r="1.4" fill="none" stroke="#777" stroke-width="0.8"/><circle cx="10.6" cy="2.2" r="1.4" fill="none" stroke="#777" stroke-width="0.8"/></svg>
<div class="a" style="left:822px;top:476px;font-family:'Liberation Sans',sans-serif;font-size:13.5px;line-height:16px;color:rgba(140,140,140,0.6);white-space:nowrap">激活 Windows</div>
<div class="a" style="left:10px;top:483px;width:867px;height:3px;background:#d2d2d2"></div>
<div class="a" style="left:877px;top:483px;width:105px;height:3px;border-radius:0 1.5px 1.5px 0;background:#262626"></div>
<div class="a" style="left:10px;top:483px;width:524.5px;height:2.3px;border-radius:1px 0 0 1px;background:#3a78d4"></div>
</body>
</html>
